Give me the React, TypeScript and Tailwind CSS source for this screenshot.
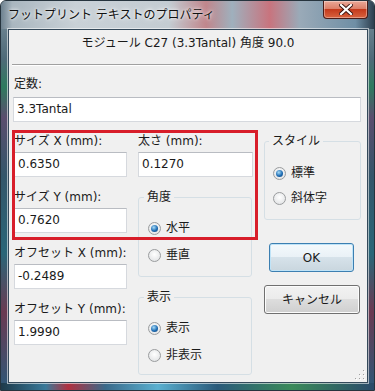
import React from "react";

function Radio({ checked, label }: { checked?: boolean; label: string }) {
  return (
    <div className="flex h-4 items-center gap-[5px]">
      <span className="flex h-[13px] w-[13px] items-center justify-center rounded-full border border-[#9a9c9e] bg-[radial-gradient(circle_at_50%_40%,#ffffff,#dcdee0)]">
        {checked && (
          <span className="h-[7px] w-[7px] rounded-full bg-[radial-gradient(circle_at_40%_35%,#a8dcf8,#1f6db4_55%,#0c3d70)]" />
        )}
      </span>
      <span className="leading-4">{label}</span>
    </div>
  );
}

function Field({ value, className = "" }: { value: string; className?: string }) {
  return (
    <div
      className={`h-[25px] border border-[#d6d9de] border-t-[#b9bcc2] bg-white pl-[3px] leading-[23px] ${className}`}
    >
      {value}
    </div>
  );
}

function Label({ text, className = "" }: { text: string; className?: string }) {
  return <div className={`mb-[3px] h-4 leading-4 ${className}`}>{text}</div>;
}

export default function App() {
  return (
    <div className="relative h-[391px] w-[375px] overflow-hidden rounded-t-[6px] border border-[#26343e] bg-[linear-gradient(180deg,#7f93a0_0%,#4e6a78_15%,#2e7a5e_22%,#5a4e6e_30%,#34566a_45%,#2a6678_65%,#6a3a52_80%,#2c5878_100%)] font-[family-name:'DejaVu_Sans','Noto_Sans_CJK_JP',sans-serif] text-[12px] text-[#1a1a1a]">
      {/* title bar */}
      <div className="flex h-[28px] items-center bg-[linear-gradient(90deg,#6e8290_0%,#a9b6bf_3%,#c9d1d7_20%,#c3ccd2_45%,#c0868c_55%,#9fb0bd_62%,#c8747e_72%,#9aaab8_80%,#6f8fa5_95%,#2d3f4f_100%)] pl-[7px]">
        <span className="text-[#111] [text-shadow:0_0_6px_#fff,0_0_3px_#fff]">
          フットプリント テキストのプロパティ
        </span>
        <div className="ml-auto mr-[6px] flex h-[18px] w-[45px] items-center justify-center self-start rounded-b-[4px] border border-t-0 border-[#4a1c18] bg-[linear-gradient(#eaa898,#dc806a_45%,#c43a1c_50%,#d8633f)] shadow-[inset_0_0_0_1px_rgba(255,255,255,0.35)]">
          <svg width="14" height="11" viewBox="0 0 14 11">
            <path
              d="M2 1 L12 10 M12 1 L2 10"
              stroke="#3a1410"
              strokeWidth="4"
              strokeLinecap="square"
            />
            <path
              d="M2 1 L12 10 M12 1 L2 10"
              stroke="#ffffff"
              strokeWidth="2.2"
              strokeLinecap="square"
            />
          </svg>
        </div>
      </div>

      {/* client area */}
      <div className="relative ml-[7px] h-[354px] w-[360px] border border-[#34495a] bg-[#f0f0f0] shadow-[0_0_0_1px_rgba(255,255,255,0.55)]">
        <div className="pt-[5px] text-center leading-4">モジュール C27 (3.3Tantal) 角度 90.0</div>
        <div className="ml-[3px] mt-[13px] w-[349px] border-t border-b border-t-[#a0a0a0] border-b-white" />

        <div className="mt-[10px] pl-[5px] leading-4">定数:</div>
        <Field value="3.3Tantal" className="ml-[4px] mt-[5px] w-[348px]" />

        <div className="mt-[11px] flex items-start pl-[5px]">
          {/* left column */}
          <div className="w-[113px]">
            <Label text="サイズ X (mm):" />
            <Field value="0.6350" />
            <Label text="サイズ Y (mm):" className="mt-[12px]" />
            <Field value="0.7620" />
            <Label text="オフセット X (mm):" className="mt-[12px]" />
            <Field value="-0.2489" />
            <Label text="オフセット Y (mm):" className="mt-[12px]" />
            <Field value="1.9990" />
          </div>

          {/* middle column */}
          <div className="ml-[11px] w-[115px]">
            <Label text="太さ (mm):" />
            <Field value="0.1270" />
            <fieldset className="mt-[12px] w-[114px] rounded-[3px] border border-[#d5dfe5] pb-[13px] pl-[9px] pt-[15px]">
              <legend className="ml-[-4px] h-4 px-[3px] leading-4">角度</legend>
              <Radio checked label="水平" />
              <div className="mt-[11px]">
                <Radio label="垂直" />
              </div>
            </fieldset>
            <fieldset className="mt-[12px] w-[114px] rounded-[3px] border border-[#d5dfe5] pb-[11px] pl-[9px] pt-[15px]">
              <legend className="ml-[-4px] h-4 px-[3px] leading-4">表示</legend>
              <Radio checked label="表示" />
              <div className="mt-[11px]">
                <Radio label="非表示" />
              </div>
            </fieldset>
          </div>

          {/* right column */}
          <div className="ml-[11px] w-[97px]">
            <fieldset className="rounded-[3px] border border-[#d5dfe5] pb-[13px] pl-[8px] pt-[16px]">
              <legend className="ml-[-4px] h-4 px-[3px] leading-4">スタイル</legend>
              <Radio checked label="標準" />
              <div className="mt-[9px]">
                <Radio label="斜体字" />
              </div>
            </fieldset>
            <button className="ml-[5px] mt-[23px] flex h-[29px] w-[85px] items-center justify-center rounded-[3px] border border-[#3c7fb1] bg-[linear-gradient(#f4f9fc,#e9f1f6_50%,#d6e2ea_50%,#c9d6de)] shadow-[inset_0_0_0_1px_#bfe3f7]">
              OK
            </button>
            <button className="mt-[13px] flex h-[29px] w-[96px] items-center justify-center rounded-[3px] border border-[#707070] bg-[linear-gradient(#f2f2f2,#ebebeb_50%,#dddddd_50%,#cfcfcf)] shadow-[inset_0_0_0_1px_#fcfcfc]">
              キャンセル
            </button>
          </div>
        </div>

        {/* size grip */}
        <svg className="absolute bottom-[2px] right-[2px]" width="10" height="10" viewBox="0 0 10 10">
          {[
            [8, 0],
            [8, 4],
            [4, 4],
            [8, 8],
            [4, 8],
            [0, 8],
          ].map(([x, y]) => (
            <g key={`${x}-${y}`}>
              <rect x={x + 1} y={y + 1} width="1" height="1" fill="#ffffff" />
              <rect x={x} y={y} width="1" height="1" fill="#a0a0a0" />
            </g>
          ))}
        </svg>
      </div>

      {/* bottom frame */}
      <div className="h-[7px] bg-[linear-gradient(90deg,#1d3a4a,#3a7a9a_12%,#b03040_18%,#3a6a8a_28%,#5ab0d0_42%,#2a5a7a_58%,#3a8a5a_78%,#2a4a6a)]" />

      {/* annotation */}
      <div className="absolute left-[11px] top-[129px] h-[110px] w-[246px] border-[3px] border-[#d81e2a]" />
    </div>
  );
}
